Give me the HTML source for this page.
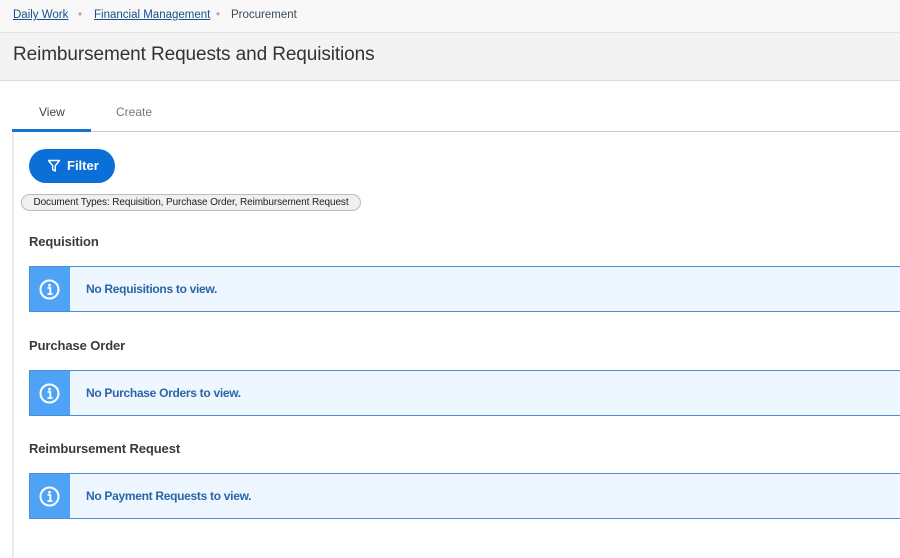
<!DOCTYPE html><html><head><style>
body{margin:0;width:900px;height:558px;overflow:hidden;background:#fff;font-family:"Liberation Sans",sans-serif;position:relative}
.a{position:absolute}
.bc{top:0;left:0;width:900px;height:32px;background:#f8f8f8;font-size:11.5px;color:#3a4a5c}
.bc span{position:absolute;top:9px}
.bc u{color:#1a4f8a}
.hd{top:32px;left:0;width:900px;height:47px;background:#f3f3f3;border-top:1px solid #e4e4e4;border-bottom:1px solid #dcdcdc}
.hd div{position:absolute;left:13px;top:11px;font-size:19px;color:#333;letter-spacing:-0.1px}
.tab{font-size:12px;top:105px}
.al{left:29px;width:871px;height:44px;background:#eef6ff;border:1px solid #4a8fd6;border-right:none}
.al .ic{position:absolute;left:0;top:0;width:40px;height:44px;background:#4fa3f7}
.al .t{position:absolute;left:56px;top:15px;font-size:12px;color:#2a65a8;font-weight:bold;letter-spacing:-0.3px}
.h{left:29px;font-size:13px;font-weight:bold;color:#3a3a3a;letter-spacing:-0.1px}
</style></head><body>
<div class="a bc"><span style="left:13px"><u>Daily Work</u></span><span style="left:78px;color:#aaa">•</span><span style="left:94px"><u>Financial Management</u></span><span style="left:216px;color:#aaa">•</span><span style="left:231px">Procurement</span></div>
<div class="a hd"><div>Reimbursement Requests and Requisitions</div></div>
<div class="a tab" style="left:39px;color:#444">View</div>
<div class="a tab" style="left:116px;color:#777">Create</div>
<div class="a" style="left:12px;top:129px;width:79px;height:3px;background:#1a6fd1"></div>
<div class="a" style="left:91px;top:131px;width:809px;height:1px;background:#ccc"></div>
<div class="a" style="left:12px;top:132px;width:2px;height:426px;background:#ececec"></div>
<div class="a" style="left:29px;top:149px;width:86px;height:34px;border-radius:17px;background:#0b6fd8;color:#fff;font-size:13px;font-weight:bold">
<svg class="a" style="left:18px;top:10px" width="14" height="14" viewBox="0 0 14 14"><path d="M1.5 1.5h11l-4.2 5.2v5.3l-2.6-1.3v-4z" fill="none" stroke="#fff" stroke-width="1.4" stroke-linejoin="round"/></svg>
<span class="a" style="left:38px;top:9px">Filter</span></div>
<div class="a" style="left:21px;top:194px;width:338px;height:15px;border:1px solid #bbb;border-radius:9px;background:#f0f0f0;font-size:10px;color:#222;text-align:center;line-height:15px;white-space:nowrap;letter-spacing:-0.1px">Document Types: Requisition, Purchase Order, Reimbursement Request</div>
<div class="a h" style="top:234px">Requisition</div>
<div class="a al" style="top:266px"><div class="ic"><svg class="a" style="left:9px;top:12px" width="21" height="21" viewBox="0 0 21 21"><circle cx="10.5" cy="10.5" r="9" fill="none" stroke="#fff" stroke-width="2"/><circle cx="10.5" cy="6.3" r="1.4" fill="#fff"/><path d="M8.5 9h2.8v5.5M8.5 15h5" stroke="#fff" stroke-width="1.8" fill="none"/></svg></div><div class="t">No Requisitions to view.</div></div>
<div class="a h" style="top:338px">Purchase Order</div>
<div class="a al" style="top:370px"><div class="ic"><svg class="a" style="left:9px;top:12px" width="21" height="21" viewBox="0 0 21 21"><circle cx="10.5" cy="10.5" r="9" fill="none" stroke="#fff" stroke-width="2"/><circle cx="10.5" cy="6.3" r="1.4" fill="#fff"/><path d="M8.5 9h2.8v5.5M8.5 15h5" stroke="#fff" stroke-width="1.8" fill="none"/></svg></div><div class="t">No Purchase Orders to view.</div></div>
<div class="a h" style="top:441px">Reimbursement Request</div>
<div class="a al" style="top:473px"><div class="ic"><svg class="a" style="left:9px;top:12px" width="21" height="21" viewBox="0 0 21 21"><circle cx="10.5" cy="10.5" r="9" fill="none" stroke="#fff" stroke-width="2"/><circle cx="10.5" cy="6.3" r="1.4" fill="#fff"/><path d="M8.5 9h2.8v5.5M8.5 15h5" stroke="#fff" stroke-width="1.8" fill="none"/></svg></div><div class="t">No Payment Requests to view.</div></div>
</body></html>
